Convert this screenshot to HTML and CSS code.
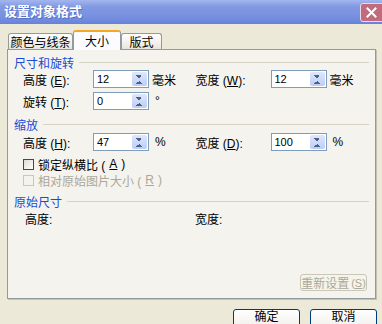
FILE: index.html
```html
<!DOCTYPE html>
<html lang="zh-CN">
<head>
  <meta charset="UTF-8">
  <title>设置对象格式</title>
  <link rel="stylesheet" href="styles.css">
</head>
<body>
  <div class="window">
    <div class="titlebar">
      <span class="title">设置对象格式</span>
      <span class="close-btn">
        <svg width="11" height="11" viewBox="0 0 11 11"><path d="M1.5 1.5 L9.5 9.5 M9.5 1.5 L1.5 9.5" stroke="#fff" stroke-width="2" stroke-linecap="square"/></svg>
      </span>
    </div>

    <div class="tabs">
      <div class="tab tab-first">颜色与线条</div>
      <div class="tab active">大小</div>
      <div class="tab tab-last">版式</div>
    </div>

    <div class="panel">
      <!-- size and rotation -->
      <div class="group-title g1"><span>尺寸和旋转</span></div>
      <div class="row r1">
        <div class="field">
          <label class="lbl">高度 (<u>E</u>):</label>
          <div class="spin"><input type="text" value="12"><span class="spin-btn"></span></div>
          <span class="unit">毫米</span>
        </div>
        <div class="field right">
          <label class="lbl">宽度 (<u>W</u>):</label>
          <div class="spin"><input type="text" value="12"><span class="spin-btn"></span></div>
          <span class="unit">毫米</span>
        </div>
      </div>
      <div class="row r2">
        <div class="field">
          <label class="lbl">旋转 (<u>T</u>):</label>
          <div class="spin"><input type="text" value="0"><span class="spin-btn"></span></div>
          <span class="unit deg">°</span>
        </div>
      </div>

      <!-- scale -->
      <div class="group-title g2"><span>缩放</span></div>
      <div class="row r3">
        <div class="field">
          <label class="lbl">高度 (<u>H</u>):</label>
          <div class="spin"><input type="text" value="47"><span class="spin-btn"></span></div>
          <span class="unit pct">%</span>
        </div>
        <div class="field right">
          <label class="lbl">宽度 (<u>D</u>):</label>
          <div class="spin"><input type="text" value="100"><span class="spin-btn"></span></div>
          <span class="unit pct">%</span>
        </div>
      </div>
      <div class="check c1"><span class="box"></span>锁定纵横比 (<u>A</u>)</div>
      <div class="check c2 disabled"><span class="box"></span>相对原始图片大小 (<u>R</u>)</div>

      <!-- original size -->
      <div class="group-title g3"><span>原始尺寸</span></div>
      <div class="row orig">
        <span class="orig-left">高度:</span>
        <span>宽度:</span>
      </div>

      <button class="reset-btn" disabled>重新设置<span class="key">(<u>S</u>)</span></button>
    </div>

    <div class="footer">
      <button class="btn">确定</button>
      <button class="btn">取消</button>
    </div>
  </div>
</body>
</html>
```

FILE: styles.css
```css
/* XP style dialog */
body {
  margin: 0;
  font-family: "Liberation Sans", "Noto Sans CJK SC", sans-serif;
  font-size: 12px;
  color: #000;
}

.window {
  width: 382px;
  height: 324px;
  overflow: hidden;
  background: #ece9d8;
  display: flex;
  flex-direction: column;
}

/* Title bar */
.titlebar {
  height: 24px;
  flex: none;
  display: flex;
  justify-content: space-between;
  padding-left: 4px;
  background: linear-gradient(#a3b6ee, #8299e3 30%, #7890e0 70%, #6b85dc);
  box-sizing: border-box;
  border-bottom: 1px solid #6a82d6;
}

.title {
  color: #fff;
  font-weight: bold;
  font-size: 13px;
  line-height: 24px;
  text-shadow: 1px 1px #5570c8;
}

.close-btn {
  width: 21px;
  height: 17px;
  margin-top: 3px;
  margin-right: -4px;
  border: 1px solid #e8dce4;
  border-radius: 3px;
  background: #c26b7e;
  display: flex;
  align-items: center;
  justify-content: center;
  padding-right: 3px;
}

/* Tabs */
.tabs {
  height: 26px;
  flex: none;
  display: flex;
  align-items: flex-end;
  padding-left: 8px;
  margin-bottom: -1px;
  position: relative;
  z-index: 1;
  box-sizing: border-box;
}

.tab {
  height: 16px;
  margin-bottom: 1px;
  border: 1px solid #919b9c;
  border-bottom: none;
  border-radius: 3px 3px 0 0;
  background: linear-gradient(#fefefe, #f2f1ec 60%, #e6e4dc);
  display: flex;
  align-items: center;
  justify-content: center;
  box-sizing: border-box;
}

.tab-first {
  width: 65px;
}

.tab-last {
  width: 41px;
}

.tab.active {
  width: 48px;
  height: 20px;
  margin-bottom: 0;
  border-top: 2px solid #f5a623;
  background: #fcfcfe;
  padding-bottom: 1px;
}

/* Panel */
.panel {
  height: 250px;
  margin: 0 6px 0 7px;
  flex: none;
  border: 1px solid #919b9c;
  box-shadow: 1px 1px 0 #c5c2b2;
  background: #f4f3ee;
  display: flex;
  flex-direction: column;
  padding: 0 7px 7px 6px;
  box-sizing: border-box;
}

.group-title {
  height: 14px;
  display: flex;
  align-items: center;
  gap: 5px;
  color: #1a4bd6;
  flex: none;
}

.group-title::after {
  content: "";
  flex: 1;
  height: 1px;
  background: #d5d3c5;
  margin-right: -1px;
}

.g1 { margin-top: 5px; }
.g2 { margin-top: 7px; }
.g3 { margin-top: 7px; }

.row {
  height: 18px;
  display: flex;
  align-items: center;
  padding-left: 9px;
  flex: none;
}

.r1 { margin-top: 1px; }
.r2 { margin-top: 4px; }
.r3 { margin-top: 2px; }

.field {
  width: 174px;
  display: flex;
  align-items: center;
}

.field .lbl {
  width: 70px;
  flex: none;
}

.field.right .lbl {
  width: 75px;
}

u {
  text-decoration: underline;
  text-underline-offset: 1px;
}

/* Spin box */
.spin {
  width: 56px;
  height: 18px;
  flex: none;
  border: 1px solid #7f9db9;
  background: #fff;
  display: flex;
  box-sizing: border-box;
}

.spin input {
  flex: 1;
  min-width: 0;
  border: none;
  outline: none;
  padding: 0 0 0 3px;
  margin: 0;
  font: inherit;
  font-size: 11px;
  background: transparent;
}

.spin-btn {
  width: 15px;
  margin: 1px;
  border-radius: 2px;
  background:
    linear-gradient(45deg, transparent 50%, #4d6185 50%) 4px 3px / 3px 3px no-repeat,
    linear-gradient(-45deg, transparent 50%, #4d6185 50%) 7px 3px / 3px 3px no-repeat,
    linear-gradient(135deg, transparent 50%, #4d6185 50%) 4px 9px / 3px 3px no-repeat,
    linear-gradient(-135deg, transparent 50%, #4d6185 50%) 7px 9px / 3px 3px no-repeat,
    linear-gradient(#dfe7fc, #bccdf6);
}

.unit {
  margin-left: 3px;
}

.unit.deg,
.unit.pct {
  margin-left: 6px;
}

/* Checkboxes */
.check {
  height: 14px;
  display: flex;
  align-items: center;
  gap: 4px;
  padding-left: 9px;
  flex: none;
}

.c1 { margin-top: 6px; }
.c2 { margin-top: 2px; }

.check .box {
  width: 11px;
  height: 11px;
  border: 1px solid #1c5180;
  background: linear-gradient(135deg, #dcdcd6, #fff);
  box-sizing: border-box;
}

.check.disabled {
  color: #aca899;
}

.check.disabled .box {
  border-color: #cac8bb;
  background: #f4f3ee;
}

/* Original size */
.orig {
  height: 14px;
  margin-top: 3px;
  padding-left: 11px;
}

.orig-left {
  width: 170px;
}

.reset-btn {
  margin-top: auto;
  align-self: flex-end;
  margin-right: 1px;
  width: 67px;
  height: 17px;
  padding: 0;
  border: 1px solid #c9c7ba;
  border-radius: 3px;
  background: #f5f4ea;
  color: #aca899;
  font: inherit;
  white-space: nowrap;
  display: flex;
  align-items: center;
  justify-content: center;
}

.reset-btn .key {
  font-size: 11px;
  margin-left: 2px;
}

/* Footer buttons */
.footer {
  display: flex;
  justify-content: flex-end;
  gap: 10px;
  padding-right: 5px;
  margin-top: 10px;
}

.btn {
  width: 67px;
  height: 23px;
  flex: none;
  padding: 0;
  border: 1px solid #003c74;
  border-radius: 3px;
  background: linear-gradient(#fff, #f3f2ee 70%, #e3dfd5);
  font: inherit;
  line-height: 15px;
  display: flex;
  justify-content: center;
  align-items: flex-start;
}
```
